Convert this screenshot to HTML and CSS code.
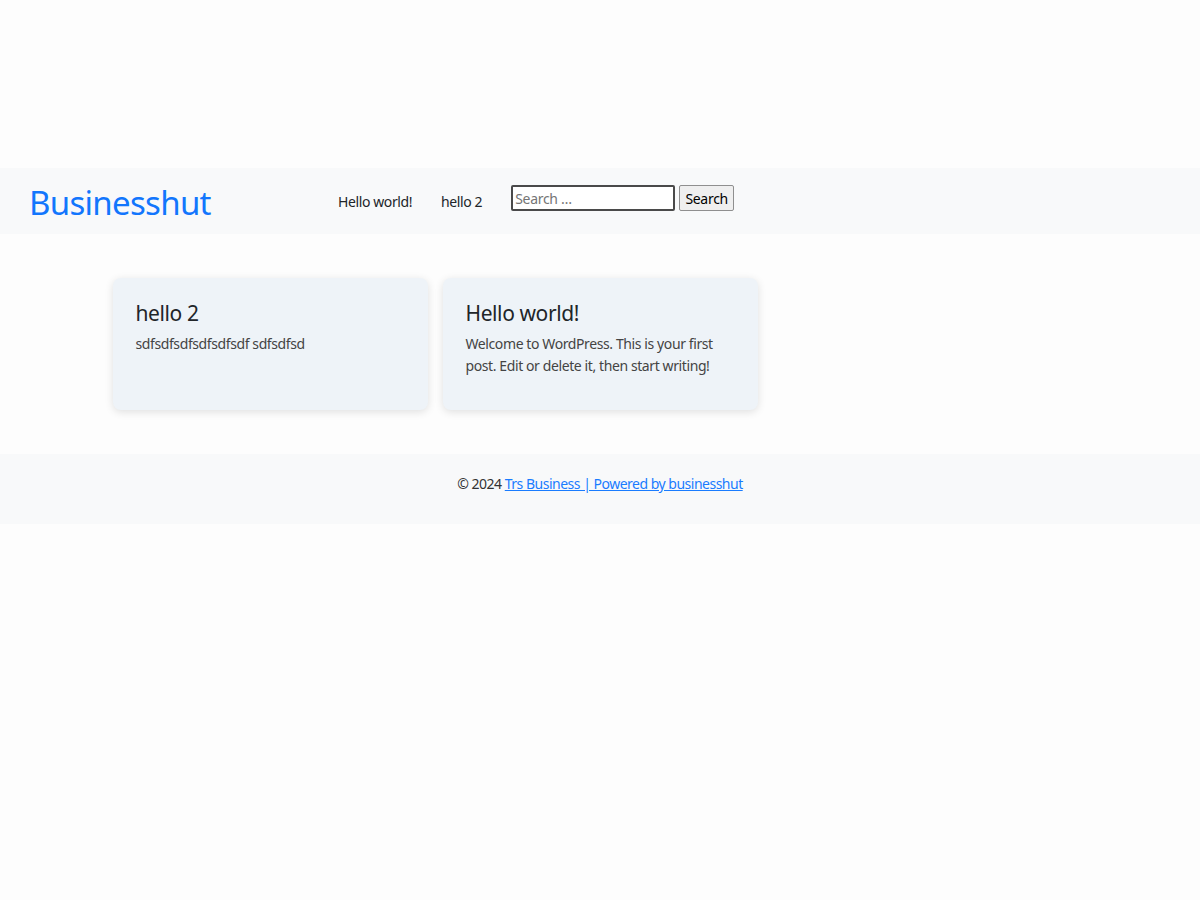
FILE: index.html
```html
<!DOCTYPE html>
<html lang="en">
<head>
<meta charset="utf-8">
<title>Businesshut</title>
<link rel="stylesheet" href="styles.css">
</head>
<body>
<div class="top-space"></div>
<header class="site-header">
  <a class="brand" href="#">Businesshut</a>
  <nav class="nav">
    <a class="nav-link" href="#">Hello world!</a>
    <a class="nav-link" href="#">hello 2</a>
    <form class="search-form">
      <input class="search-field" type="search" placeholder="Search …">
      <button class="search-btn" type="button">Search</button>
    </form>
  </nav>
</header>
<main class="posts">
  <article class="card">
    <h2 class="card-title">hello 2</h2>
    <p class="card-text">sdfsdfsdfsdfsdfsdf sdfsdfsd</p>
  </article>
  <article class="card">
    <h2 class="card-title">Hello world!</h2>
    <p class="card-text">Welcome to WordPress. This is your first post. Edit or delete it, then start writing!</p>
  </article>
</main>
<footer class="site-footer">
  <p>© 2024 <a href="#">Trs Business | Powered by businesshut</a></p>
</footer>
</body>
</html>
```
FILE: styles.css
```css
* { box-sizing: border-box; }
html, body { margin: 0; padding: 0; background: #fdfdfd; }
body {
  font-family: "Noto Sans", "Open Sans", sans-serif;
  color: #212529;
}
.top-space { height: 168px; }
.site-header {
  background: #f8f9fa;
  height: 66px;
  display: flex;
  align-items: center;
  padding-left: 29px;
}
.brand {
  font-size: 33px;
  letter-spacing: -0.7px;
  color: #1276fd;
  text-decoration: none;
  width: 309px;
  line-height: 1;
  margin-top: 2px;
}
.nav {
  display: flex;
  align-items: center;
}
.nav-link {
  font-size: 14px;
  letter-spacing: -0.4px;
  color: #212529;
  text-decoration: none;
  margin-right: 29px;
  padding-top: 1px;
}
.nav-link:last-of-type { margin-right: 29px; }
.search-form {
  display: flex;
  gap: 4px;
  margin-top: -6px;
}
.search-field {
  width: 164px;
  height: 26px;
  border: 2px solid #4a4a4a;
  border-radius: 2px;
  font-family: inherit;
  font-size: 14px;
  letter-spacing: -0.3px;
  padding: 0 2px;
  background: #fff;
}
.search-field::placeholder { color: #757575; }
.search-btn {
  height: 26px;
  width: 55px;
  border: 1px solid #8f8f8f;
  border-radius: 2px;
  background: #efefef;
  font-family: inherit;
  font-size: 14px;
  letter-spacing: -0.3px;
  color: #000;
  padding: 0;
}
.posts {
  width: 975px;
  margin: 44px auto 44px;
  display: grid;
  grid-template-columns: repeat(3, 1fr);
  gap: 15px;
}
.card {
  background: #eef3f8;
  border-radius: 8px;
  box-shadow: 0 2px 8px rgba(0,0,0,0.12);
  padding: 22px 23px 33px;
}
.card-title {
  font-size: 21px;
  letter-spacing: -0.4px;
  font-weight: 400;
  margin: 0 0 7px;
  color: #212529;
  line-height: 1.2;
  padding-top: 1px;
}
.card-text {
  font-size: 14px;
  letter-spacing: -0.4px;
  line-height: 22px;
  color: #444;
  margin: 0;
}
.site-footer {
  background: #f8f9fa;
  height: 70px;
  display: flex;
  align-items: center;
  justify-content: center;
}
.site-footer p {
  margin: 0 0 12px;
  font-size: 14px;
  letter-spacing: -0.5px;
  color: #333;
}
.site-footer a { color: #1a7cff; }
```
